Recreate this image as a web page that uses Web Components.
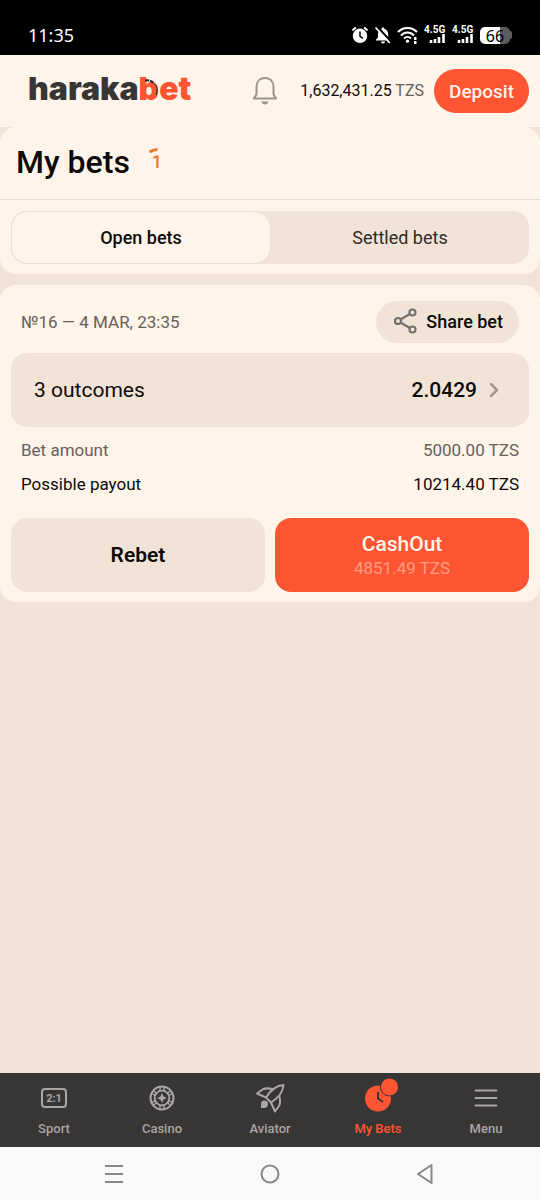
<!DOCTYPE html>
<html lang="en">
<head>
<meta charset="utf-8">
<meta name="viewport" content="width=device-width, initial-scale=1">
<title>My bets</title>
<style>
  :root {
    --cream: #fff4e9;
    --sand: #f2e3d7;
    --tab: #f1e4d7;
    --accent: #ff5533;
    --ink: #0d0b09;
    --muted: #66605a;
    --dark: #383535;
    --grey: #a9a6a6;
  }
  body { margin: 0; background: var(--sand); color: var(--ink); font-family: Roboto, "Liberation Sans", sans-serif; }
</style>
</head>
<body>
<bet-app></bet-app>

<template id="t-app">
  <style>
    :host { display: flex; flex-direction: column; min-height: 100vh; }
    main { flex: 1; display: flex; flex-direction: column; gap: 11px; }
  </style>
  <status-bar></status-bar>
  <site-header></site-header>
  <main>
    <bets-heading></bets-heading>
    <bet-card>
      <span slot="meta">№16 — 4 MAR, 23:35</span>
      <span slot="outcomes">3 outcomes</span>
      <span slot="odds">2.0429</span>
      <span slot="amount">5000.00 TZS</span>
      <span slot="payout">10214.40 TZS</span>
      <span slot="cashout">4851.49 TZS</span>
    </bet-card>
  </main>
  <bottom-nav></bottom-nav>
  <system-bar></system-bar>
</template>

<template id="t-status">
  <style>
    :host { display: flex; align-items: center; justify-content: space-between; height: 55px; box-sizing: border-box; padding: 15px 28px 0; background: #000; color: #fff; }
    time { font: 18px/24px "Noto Sans", sans-serif; }
    .icons { display: flex; align-items: center; gap: 5px; }
    svg { display: block; }
    .signal { width: 23px; height: 20px; }
    .signal text { font: 700 10px Roboto, sans-serif; fill: #fff; }
    .battery { display: flex; align-items: center; }
    .level { width: 30px; height: 17px; border-radius: 5px; background: linear-gradient(90deg, #fff 66%, #5c5c5c 66%); color: #000; font: 16px/18px "Noto Sans", sans-serif; text-align: center; }
    .tip { width: 2px; height: 8px; border-radius: 0 3px 3px 0; background: #5c5c5c; }
  </style>
  <time>11:35</time>
  <div class="icons">
    <svg width="18" height="18" viewBox="0 0 18 18"><circle cx="9" cy="9.8" r="7.2" fill="#fff"/><path d="M1.5 4.5 4.800 1.500M16.500 4.500 13.200 1.500" stroke="#fff" stroke-width="2"/><path d="M9 5.500v4.800l3 2" fill="none" stroke="#000" stroke-width="1.500"/></svg>
    <svg width="18" height="18" viewBox="0 0 18 18"><path d="M9 1.500c.9 0 1.300.5 1.300 1.200 2.500.7 3.900 2.800 3.900 5.300v3.500l2 2v1H2v-1l2-2V8c0-2.500 1.300-4.600 3.700-5.300 0-.7.4-1.200 1.300-1.200z" fill="#fff"/><path d="M7 15.500h4a2 2 0 0 1-4 0z" fill="#fff"/><path d="M3.500 1 17.500 16" stroke="#000" stroke-width="2"/><path d="M1.500 1.500 15.800 17" stroke="#fff" stroke-width="1.800"/></svg>
    <svg width="22" height="18" viewBox="0 0 22 18" fill="none" stroke="#fff" stroke-width="2"><path d="M1 6c5-5.500 14-5.500 19 0M4 9.500c3.500-4 9.500-4 13 0M7 12.500c2-2 5-2 7 0"/><circle cx="10.500" cy="15.200" r="1.600" fill="#fff" stroke="none"/><path d="M18.300 11v3M18.300 15v3" stroke-width="2.400"/></svg>
    <svg class="signal" viewBox="0 0 23 20"><text x="0" y="8">4.5G</text><path d="M7 18v-3M11 18v-4M15 18v-6M19.500 18v-9" stroke="#fff" stroke-width="2.600"/></svg>
    <svg class="signal" viewBox="0 0 23 20"><text x="0" y="8">4.5G</text><path d="M7 18v-3M11 18v-4M15 18v-6M19.500 18v-9" stroke="#fff" stroke-width="2.600"/></svg>
    <div class="battery"><div class="level">66</div><div class="tip"></div></div>
  </div>
</template>

<template id="t-header">
  <style>
    :host { display: flex; align-items: center; height: 72px; box-sizing: border-box; padding: 0 11px 0 28px; background: var(--cream); }
    .logo { position: relative; color: var(--dark); font: 900 32px/36px Inter, sans-serif; text-decoration: none; margin-right: auto; padding-bottom: 4px; }
    .logo b { font-weight: 900; color: var(--accent); }
    .logo svg { position: absolute; right: 32px; top: 7px; }
    button { font-family: inherit; cursor: pointer; border: 0; padding: 0; }
    .bell { background: none; display: flex; margin-right: 22px; }
    .balance { font-size: 16px; line-height: 20px; margin-right: 10px; white-space: nowrap; }
    .balance span { color: var(--muted); }
    .deposit { height: 44px; padding: 0 15px; border-radius: 22px; background: var(--accent); color: var(--cream); font-size: 19px; font-weight: 500; }
  </style>
  <a class="logo" href="#home">haraka<b>bet</b><svg width="14" height="20" viewBox="0 0 14 20" fill="none" stroke="#222"><path d="M0 2.500q6-1 9 3" stroke-width="2" stroke-dasharray="4 1"/><path d="M9 5q5 5 2 12" stroke-width="1"/></svg></a>
  <button class="bell" aria-label="Notifications"><svg width="26" height="30" viewBox="0 0 26 30"><path d="M13 2c-5.500 0-8.500 4-8.500 9v6.500c0 1.800-1.500 3-2.500 5h22c-1-2-2.500-3.200-2.500-5V11c0-5-3-9-8.500-9z" fill="none" stroke="#999490" stroke-width="2" stroke-linejoin="round"/><path d="M9.500 25.500h7c-.5 2-1.800 3-3.500 3s-3-1-3.500-3z" fill="#999490"/></svg></button>
  <div class="balance">1,632,431.25 <span>TZS</span></div>
  <button class="deposit">Deposit</button>
</template>

<template id="t-heading">
  <style>
    :host { display: block; background: var(--cream); border-radius: 16px; }
    .title { display: flex; align-items: center; gap: 18px; height: 73px; box-sizing: border-box; padding: 0 16px 2px; border-bottom: 1px solid #eaded4; }
    h1 { margin: 0; font-size: 32px; line-height: 40px; font-weight: 500; }
    .count { position: relative; width: 18px; color: #ed7a30; font-size: 18px; line-height: 24px; font-weight: 500; text-align: center; }
    .count svg { position: absolute; left: 0; top: -4px; }
    .wrap { padding: 11px 11px 10px; }
    .tabs { display: flex; height: 53px; border-radius: 16px; background: var(--tab); }
    button { flex: 1; font: 400 18px/24px Roboto, sans-serif; color: #302a26; background: none; border: 0; border-radius: 16px; cursor: pointer; }
    button[aria-selected="true"] { background: var(--cream); border: 1px solid #eaddd1; font-weight: 500; color: var(--ink); }
  </style>
  <div class="title"><h1>My bets</h1><div class="count">1<svg width="12" height="10" viewBox="0 0 12 10"><path d="M1.500 6q4-2.500 8-2.500" fill="none" stroke="#ed7a30" stroke-width="3"/></svg></div></div>
  <div class="wrap"><div class="tabs" role="tablist">
    <button role="tab" aria-selected="true">Open bets</button>
    <button role="tab" aria-selected="false">Settled bets</button>
  </div></div>
</template>

<template id="t-card">
  <style>
    :host { display: block; background: var(--cream); border-radius: 16px; padding: 16px 11px 10px; }
    button { font-family: inherit; color: var(--ink); background: var(--sand); border: 0; cursor: pointer; }
    .head, dl div { display: flex; align-items: center; justify-content: space-between; padding: 0 10px; }
    .meta { color: var(--muted); font-size: 17px; line-height: 24px; }
    .share { display: flex; align-items: center; gap: 8px; height: 42px; padding: 0 16px 2px 18px; border-radius: 21px; background: var(--tab); font-size: 18px; font-weight: 500; }
    .outcomes { display: flex; align-items: center; width: 100%; height: 74px; margin: 10px 0 6px; padding: 0 28px 0 23px; border-radius: 16px; font-size: 21px; }
    .odds { margin-left: auto; margin-right: 10px; font-weight: 500; }
    dl { margin: 0 0 17px; font-size: 17px; line-height: 34px; }
    dd { margin: 0; }
    .soft { color: var(--muted); }
    .actions { display: grid; grid-template-columns: 1fr 1fr; gap: 10px; }
    .actions button { height: 74px; border-radius: 16px; font-size: 21px; line-height: 24px; font-weight: 600; padding: 0; }
    .actions .rebet { background: var(--tab); }
    .actions .cash { background: var(--accent); color: var(--cream); font-weight: 500; padding-top: 2px; }
    .cash small { display: block; font-size: 17px; font-weight: 400; color: #ff9c80; }
  </style>
  <div class="head">
    <div class="meta"><slot name="meta"></slot></div>
    <button class="share"><svg width="24" height="26" viewBox="0 0 24 26" fill="none" stroke="#75706b" stroke-width="2.200"><path d="M6.500 11.500 15.800 6M6.500 14.500 15.800 20"/><circle cx="4" cy="13" r="3"/><circle cx="18.500" cy="4.500" r="3"/><circle cx="18.500" cy="21.500" r="3"/></svg>Share bet</button>
  </div>
  <button class="outcomes"><slot name="outcomes"></slot><span class="odds"><slot name="odds"></slot></span><svg width="14" height="18" viewBox="0 0 14 18"><path d="m4 3 6 6-6 6" fill="none" stroke="#a29891" stroke-width="2.500" stroke-linecap="round" stroke-linejoin="round"/></svg></button>
  <dl>
    <div class="soft"><dt>Bet amount</dt><dd><slot name="amount"></slot></dd></div>
    <div><dt>Possible payout</dt><dd><slot name="payout"></slot></dd></div>
  </dl>
  <div class="actions">
    <button class="rebet">Rebet</button>
    <button class="cash">CashOut<small><slot name="cashout"></slot></small></button>
  </div>
</template>

<template id="t-nav">
  <style>
    :host { display: block; background: var(--dark); }
    nav { display: grid; grid-template-columns: repeat(5, 1fr); height: 74px; }
  </style>
  <nav>
    <nav-item label="Sport"><svg width="32" height="32" viewBox="0 0 32 32"><rect x="4" y="7" width="24" height="18" rx="3" fill="none" stroke="#a9a6a6" stroke-width="2"/><text x="16" y="20" text-anchor="middle" font-family="Roboto" font-weight="700" font-size="11" fill="#a9a6a6">2:1</text></svg></nav-item>
    <nav-item label="Casino"><svg width="32" height="32" viewBox="0 0 32 32" fill="none" stroke="#a9a6a6"><circle cx="16" cy="16" r="11.500" stroke-width="2"/><circle cx="16" cy="16" r="7.300" stroke-width="1.800"/><path d="M14 5v4M18 5v4M14 23v4M18 23v4M6 11.500l3 1.800M8 9l2.500 2.500M26 11.500l-3 1.800M24 9l-2.500 2.500M6 20.500l3-1.800M8 23l2.500-2.500M26 20.500l-3-1.800M24 23l-2.500-2.500" stroke-width="1.400"/><path d="m16 11 1.600 3.400L21 16l-3.400 1.600L16 21l-1.600-3.400L11 16l3.400-1.600z" fill="#a9a6a6" stroke="none"/></svg></nav-item>
    <nav-item label="Aviator"><svg width="32" height="32" viewBox="0 0 32 32" fill="none" stroke="#a9a6a6" stroke-width="2" stroke-linejoin="round"><path d="M29.500 3c-7 .5-12.500 4.500-17.500 12.500l5 5C25 15.500 29 10 29.500 3z"/><path d="M19 7.500c-4-1.500-8.500-1-10.500 0L3 11.500l9 4M25 13.500c1.500 4 1 8.500 0 10.500L21 29.500l-4-9"/><path d="M7 26v-4c0-2 1.300-3.500 3.300-3.500S14 20 14 22s-1.500 4-3.500 4z" fill="#a9a6a6" stroke="none"/></svg></nav-item>
    <nav-item label="My Bets" active><svg width="40" height="40" viewBox="0 0 40 40"><circle cx="20" cy="20.500" r="13" fill="#ff5533"/><path d="M20 14v6.500l5 3.500" fill="none" stroke="#383535" stroke-width="2"/><circle cx="31.500" cy="9" r="9" fill="#ff5533" stroke="#383535" stroke-width="1"/></svg></nav-item>
    <nav-item label="Menu"><svg width="32" height="32" viewBox="0 0 32 32"><path d="M5.500 8.500h21M5.500 16h21M5.500 23.500h21" stroke="#a9a6a6" stroke-width="2" stroke-linecap="round"/></svg></nav-item>
  </nav>
</template>

<template id="t-item">
  <style>
    :host { display: block; color: var(--grey); }
    :host([active]) { color: var(--accent); }
    a { display: flex; flex-direction: column; align-items: center; gap: 5px; color: inherit; text-decoration: none; font-size: 13px; line-height: 20px; font-weight: 500; }
    .icon { display: flex; align-items: center; justify-content: center; width: 32px; height: 32px; margin-top: 9px; }
    .icon ::slotted(svg) { flex: none; }
  </style>
  <a href="#"><span class="icon"><slot></slot></span><span class="label"></span></a>
</template>

<template id="t-system">
  <style>
    :host { display: flex; justify-content: center; align-items: center; gap: 124px; height: 53px; background: #f9f9f9; }
    button { display: flex; padding: 0; border: 0; background: none; cursor: pointer; }
    svg { fill: none; stroke: #888; stroke-width: 2; }
  </style>
  <button aria-label="Recent apps"><svg width="32" height="24" viewBox="0 0 32 24"><path d="M7 4h18M7 12h18M7 20h18"/></svg></button>
  <button aria-label="Home"><svg width="32" height="24" viewBox="0 0 32 24"><circle cx="16" cy="12" r="8.500"/></svg></button>
  <button aria-label="Back"><svg width="32" height="24" viewBox="0 0 32 24" stroke-linejoin="round"><path d="M21.500 3v18L8 12z"/></svg></button>
</template>

<script>
  const define = (name, id, setup) => customElements.define(name, class extends HTMLElement {
    constructor() {
      super();
      this.attachShadow({ mode: "open" }).append(document.getElementById(id).content.cloneNode(true));
    }
    connectedCallback() { if (setup) setup(this); }
  });
  define("status-bar", "t-status");
  define("site-header", "t-header");
  define("bets-heading", "t-heading");
  define("bet-card", "t-card");
  define("nav-item", "t-item", el => {
    el.shadowRoot.querySelector(".label").textContent = el.getAttribute("label");
    if (el.hasAttribute("active")) el.shadowRoot.querySelector("a").setAttribute("aria-current", "page");
  });
  define("bottom-nav", "t-nav");
  define("system-bar", "t-system");
  define("bet-app", "t-app");
</script>
</body>
</html>
